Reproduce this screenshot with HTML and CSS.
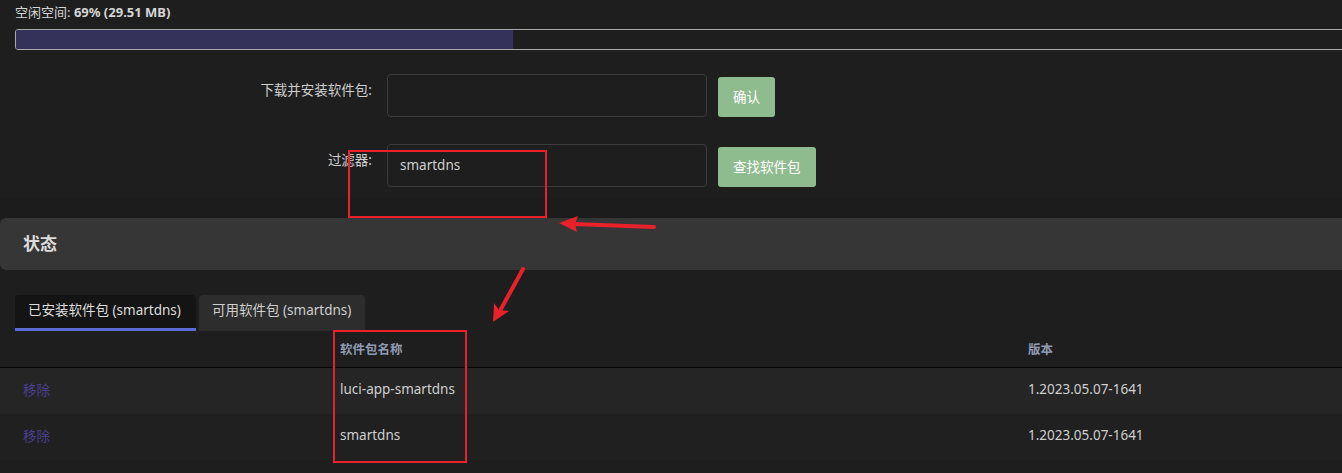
FILE: index.html
```html
<!DOCTYPE html>
<html lang="zh-CN">
<head>
<meta charset="utf-8">
<title>软件包</title>
<link rel="stylesheet" href="styles.css">
</head>
<body>
<div class="page">
  <div class="top">
    <div class="free">空闲空间: <b>69% (29.51 MB)</b></div>
    <div class="bar"><div class="bar-fill" style="width:497px"></div></div>
    <div class="form">
      <div class="row">
        <label class="lbl">下载并安装软件包:</label>
        <input class="inp" type="text" value="">
        <button class="btn">确认</button>
      </div>
      <div class="row">
        <label class="lbl">过滤器:</label>
        <input class="inp" type="text" value="smartdns">
        <button class="btn">查找软件包</button>
      </div>
    </div>
  </div>
  <div class="band"></div>
  <div class="section">
    <h3 class="section-title">状态</h3>
  </div>
  <div class="tabs">
    <div class="tab active">已安装软件包 (smartdns)</div>
    <div class="tab">可用软件包 (smartdns)</div>
  </div>
  <div class="table">
    <div class="tr th">
      <div class="c1"></div>
      <div class="c2">软件包名称</div>
      <div class="c3">版本</div>
    </div>
    <div class="tr odd">
      <div class="c1"><span class="link">移除</span></div>
      <div class="c2">luci-app-smartdns</div>
      <div class="c3">1.2023.05.07-1641</div>
    </div>
    <div class="tr even">
      <div class="c1"><span class="link">移除</span></div>
      <div class="c2">smartdns</div>
      <div class="c3">1.2023.05.07-1641</div>
    </div>
  </div>

  <svg class="annot" width="1342" height="473" viewBox="0 0 1342 473">
    <rect x="349" y="151" width="197" height="66" fill="none" stroke="#e8212b" stroke-width="2"/>
    <rect x="334" y="331" width="132" height="131" fill="none" stroke="#e8212b" stroke-width="2"/>
    <line x1="654" y1="227" x2="574" y2="224" stroke="#e8212b" stroke-width="4" stroke-linecap="round"/>
    <polygon points="559,223 578,216 575,224 577,232" fill="#e8212b"/>
    <line x1="523" y1="269" x2="501" y2="309" stroke="#e8212b" stroke-width="4" stroke-linecap="round"/>
    <polygon points="493,322 494,303 499,310 509,311" fill="#e8212b"/>
  </svg>
</div>
</body>
</html>
```

FILE: styles.css
```css
html, body {
  margin: 0;
  padding: 0;
  background: #1e1e1e;
  overflow: hidden;
}
body {
  font-family: "Noto Sans", "Noto Sans CJK SC", sans-serif;
  font-size: 13.5px;
  color: #cfcfcf;
  width: 1342px;
  height: 473px;
}
.page {
  position: relative;
  width: 1342px;
  height: 473px;
  overflow: hidden;
}
.top {
  padding: 4px 0 0 15px;
  height: 197px;
  box-sizing: border-box;
}
.free {
  line-height: 17px;
  height: 17px;
  font-size: 13px;
  color: #d6d6d6;
}
.free b {
  font-weight: 700;
}
.bar {
  margin-top: 8px;
  height: 19px;
  width: 1360px;
  border: 1px solid #a9a9a9;
  border-radius: 3px;
  background: #1e1e1e;
  overflow: hidden;
}
.bar-fill {
  height: 100%;
  background: #34325a;
}
.form {
  margin-top: 24px;
  display: flex;
  flex-direction: column;
  gap: 27px;
}
.row {
  display: flex;
  align-items: flex-start;
}
.lbl {
  width: 357px;
  text-align: right;
  padding-top: 7px;
  line-height: 18px;
  color: #cfcfcf;
}
.inp {
  margin-left: 15px;
  width: 320px;
  height: 43px;
  box-sizing: border-box;
  background: #1e1e1e;
  border: 1px solid #3b3b3b;
  border-radius: 4px;
  color: #d0d0d0;
  font: inherit;
  padding: 0 12px 2px;
  outline: none;
}
.btn {
  margin-left: 11px;
  margin-top: 3px;
  height: 40px;
  padding: 0 15px 2px;
  background: #8fbc8f;
  border: none;
  border-radius: 3px;
  color: #fff;
  font: inherit;
}
.band {
  height: 21px;
  background: #1c1c1c;
}
.section {
  height: 52px;
  box-sizing: border-box;
  padding: 0 0 3px 23px;
  background: #363636;
  border-radius: 6px 0 0 6px;
  display: flex;
  align-items: center;
}
.section-title {
  margin: 0;
  font-size: 17px;
  font-weight: 700;
  color: #dcdcdc;
}
.tabs {
  margin-top: 25px;
  padding-left: 15px;
  display: flex;
  gap: 3px;
  height: 36px;
}
.tab {
  height: 36px;
  box-sizing: border-box;
  padding: 0 14px 0 13px;
  line-height: 30px;
  border-radius: 4px 4px 0 0;
  background: #2d2d2d;
  color: #cfcfcf;
}
.tab.active {
  background: #141414;
  border-bottom: 3px solid #5b6bd6;
  color: #dedede;
  width: 181px;
}
.table {
  display: flex;
  flex-direction: column;
}
.tr {
  display: grid;
  grid-template-columns: 340px 688px 1fr;
  align-items: center;
  box-sizing: border-box;
}
.tr > div:first-child {
  padding-left: 23px;
}
.th {
  height: 37px;
  padding-bottom: 2px;
  background: #1e1e1e;
  border-bottom: 1px solid #050505;
  font-weight: 700;
  color: #8f9bb3;
  font-size: 12.5px;
}
.odd {
  height: 46px;
  padding-bottom: 4px;
  background: #252525;
}
.even {
  height: 46px;
  padding-bottom: 4px;
  background: #202020;
}
.link {
  color: #4a3f8f;
}
.annot {
  position: absolute;
  left: 0;
  top: 0;
  pointer-events: none;
}
```
